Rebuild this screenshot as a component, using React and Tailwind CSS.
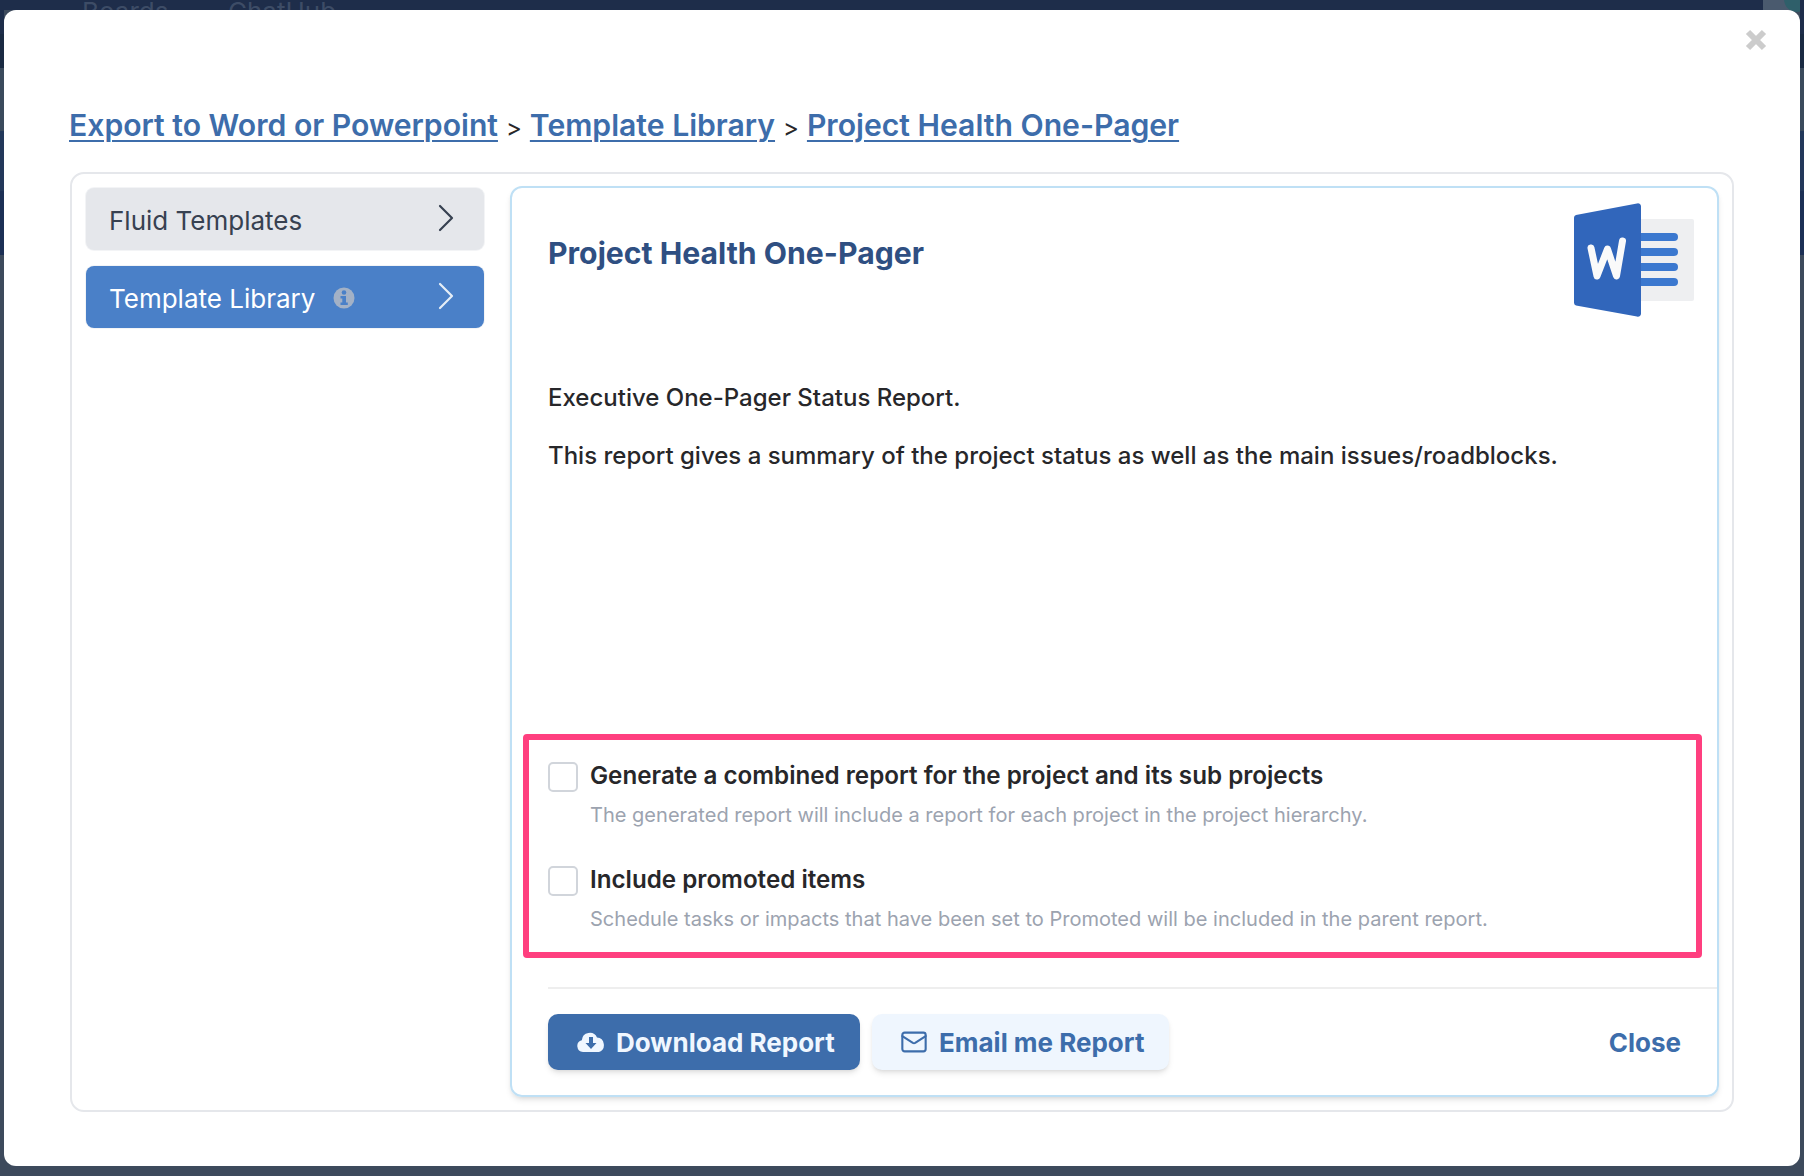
import React from "react";
import { ChevronRight, Mail } from "lucide-react";

function SideItem({ label, active, info }) {
  return (
    <div
      className={
        "flex h-[62px] items-center justify-between rounded-lg pl-[23px] pr-[14px] text-[26px] ring-1 ring-[#f3f4f6] " +
        (active ? "bg-[#4a80c8] text-white" : "bg-[#e5e7eb] text-[#374151]")
      }
    >
      <span className="flex items-center gap-[18px] pt-[2px]">
        {label}
        {info && (
          <svg width="22" height="22" viewBox="0 0 22 22">
            <circle cx="11" cy="11" r="10.500" fill="#a3b1c6" />
            <circle cx="11" cy="5.500" r="2.300" fill="#4a80c8" />
            <path d="M7.500 9h5.500v6.500h1.800V18H7.500v-2.500h1.800v-4H7.500z" fill="#4a80c8" />
          </svg>
        )}
      </span>
      <ChevronRight size={48} strokeWidth={1.1} className={active ? "-mt-[3px] text-[#e5edf7]" : "-mt-[3px] text-[#374151]"} />
    </div>
  );
}

function Option({ title, desc }) {
  return (
    <div className="flex gap-[12px]">
      <div className="mt-[4px] h-[30px] w-[30px] shrink-0 rounded-[5px] border-2 border-[#d1d5db] bg-white" />
      <div>
        <div className="text-[24.2px] leading-[36px] font-semibold text-[#27272a]">{title}</div>
        <div className="mt-[4px] text-[20.05px] leading-[34px] text-[#9ca3af]">{desc}</div>
      </div>
    </div>
  );
}

function WordLogo() {
  return (
    <svg width="122" height="116" viewBox="0 0 122 116" className="absolute right-[22px] top-[14px]">
      <rect x="66" y="17" width="55" height="82" rx="2" fill="#eeeff1" />
      <rect x="60" y="31" width="45" height="8" rx="4" fill="#3b78cf" />
      <rect x="60" y="46" width="45" height="8" rx="4" fill="#3b78cf" />
      <rect x="60" y="61" width="45" height="8" rx="4" fill="#3b78cf" />
      <rect x="60" y="76" width="45" height="8" rx="4" fill="#3b78cf" />
      <path d="M3 13 64 1.500a3 3 0 0 1 4 2.500v108a3 3 0 0 1-4 2.500L3 103.500a3 3 0 0 1-2-3V16a3 3 0 0 1 2-3z" fill="#3166bb" />
      <path d="M18 46l6 28 10.500-27 9 27 6-35" fill="none" stroke="#fafafa" strokeWidth="7" strokeLinecap="round" strokeLinejoin="round" />
    </svg>
  );
}

function Strip({ className }) {
  return (
    <div className={"absolute top-0 flex h-[1176px] w-[4px] flex-col " + className}>
      <div className="h-[34px] bg-[#1e2d4a]" />
      <div className="h-[34px] bg-[#1a2a42]" />
      <div className="h-[63px] bg-[#3a4a5c]" />
      <div className="h-[60px] bg-[#23385a]" />
      <div className="h-[64px] bg-[#1c3055]" />
    </div>
  );
}

export default function App() {
  return (
    <div
      className="relative h-[1176px] w-[1804px] overflow-hidden bg-[#3d4a5c] pb-[10px] pl-[4px] pr-[4px] pt-[10px]"
      style={{ fontFamily: "Inter, 'Liberation Sans', sans-serif" }}
    >
      <div className="absolute left-0 right-0 top-0 h-[10px] bg-[#1e2d4a]" />
      <div className="absolute right-0 top-0 h-[10px] w-[41px] bg-[#4a5a6e]" />
      <div className="absolute right-[-6px] top-[-14px] h-[26px] w-[26px] rounded-full bg-[#2f5f6a]" />
      <div className="absolute left-[82px] top-[-4px] text-[26px] leading-[32px] text-[#3d4c66]">Boards</div>
      <div className="absolute left-[228px] top-[-4px] text-[26px] leading-[32px] text-[#3d4c66]">ChatHub</div>
      <Strip className="left-0" />
      <Strip className="right-0" />

      <div className="relative flex h-[1156px] w-[1796px] flex-col rounded-xl bg-white pl-[65px] pr-[66px] pt-[92px]">
        <svg width="22" height="22" viewBox="0 0 22 22" className="absolute right-[33px] top-[19px]">
          <path d="M3 3l16 16M19 3L3 19" stroke="#cccccc" strokeWidth="6" />
        </svg>

        <div className="flex items-baseline text-[30.15px] leading-[46px] font-semibold text-[#3d6dab]">
          <a className="underline underline-offset-[4px] decoration-2">Export to Word or Powerpoint</a>
          <span className="mx-[8px] text-[24px] font-normal text-[#27272a]">&gt;</span>
          <a className="underline underline-offset-[4px] decoration-2">Template Library</a>
          <span className="mx-[8px] text-[24px] font-normal text-[#27272a]">&gt;</span>
          <a className="underline underline-offset-[4px] decoration-2">Project Health One-Pager</a>
        </div>

        <div className="ml-[1px] mt-[21px] flex h-[940px] w-[1664px] gap-[26px] rounded-[14px] border-2 border-[#e5e7eb] pb-[13px] pl-[14px] pr-[13px] pt-[12px]">
          <div className="flex w-[398px] shrink-0 flex-col gap-4 pt-[2px]">
            <SideItem label="Fluid Templates" />
            <SideItem label="Template Library" active info />
          </div>

          <div className="relative flex flex-1 flex-col rounded-xl border-2 border-[#bfe0f5] pl-[36px] shadow-md">
            <WordLogo />
            <h2 className="mt-[43px] text-[30.2px] leading-[44px] font-bold text-[#2f4f82]">Project Health One-Pager</h2>
            <p className="mt-[105px] text-[24px] leading-[36px] font-[450] text-[#27272a]">Executive One-Pager Status Report.</p>
            <p className="mt-[22px] text-[24px] leading-[36px] font-[450] text-[#27272a]">
              This report gives a summary of the project status as well as the main issues/roadblocks.
            </p>

            <div className="-ml-[25px] mt-[260px] mr-[15px] flex h-[224px] flex-col gap-[30px] rounded-sm border-[6px] border-[#ff3f7f] pl-[19px] pt-[18px]">
              <Option
                title="Generate a combined report for the project and its sub projects"
                desc="The generated report will include a report for each project in the project hierarchy."
              />
              <Option
                title="Include promoted items"
                desc="Schedule tasks or impacts that have been set to Promoted will be included in the parent report."
              />
            </div>

            <div className="mt-[29px] flex flex-1 items-start justify-between border-t-2 border-[#eeeeee] pr-[36px] pt-[25px]">
              <div className="flex gap-3">
                <button className="flex h-[56px] w-[312px] items-center gap-[11px] rounded-[10px] bg-[#3d6dab] pl-[29px] text-[26px] font-bold text-[#f0f7ff] shadow-md">
                  <svg width="28" height="24" viewBox="0 0 28 22">
                    <path d="M6 21a6 6 0 0 1-1.200-11.800A8 8 0 0 1 20 6.500 7.500 7.500 0 0 1 22 21z" fill="#f0f7ff" />
                    <path d="M12 6h4v6h3.500L14 18l-5.500-6H12z" fill="#3d6dab" />
                  </svg>
                  <span className="pt-[1px]">Download Report</span>
                </button>
                <button className="flex h-[56px] w-[297px] items-center gap-[11px] rounded-[10px] bg-[#eff6fe] pl-[28px] text-[26px] font-bold text-[#3d6dab] shadow-md">
                  <Mail size={28} strokeWidth={1.8} />
                  <span className="pt-[1px]">Email me Report</span>
                </button>
              </div>
              <div className="mt-[9px] text-[26px] font-bold text-[#3d6dab]">Close</div>
            </div>
          </div>
        </div>
      </div>
    </div>
  );
}
